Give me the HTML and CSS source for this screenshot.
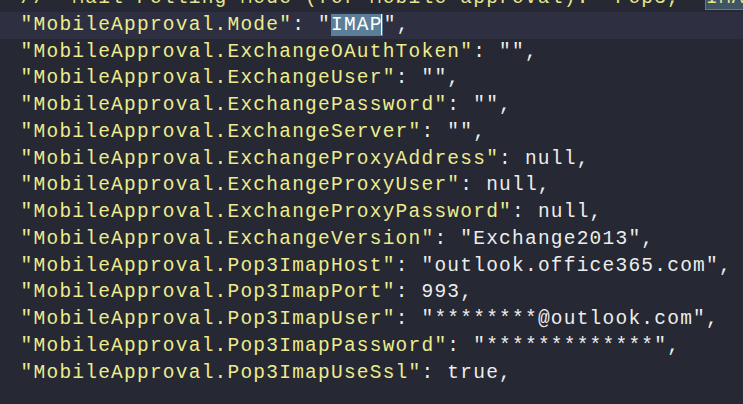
FILE: index.html
```html
<!DOCTYPE html>
<html>
<head>
<meta charset="utf-8">
<link rel="stylesheet" href="styles.css">
</head>
<body>
<div class="editor">
  <div class="line comment">//  Mail Polling Mode (for Mobile approval):  Pop3,  <span class="match">IMAP</span></div>
  <div class="line current"><span class="key">"MobileApproval.Mode"</span>: "<span class="sel">IMAP</span><span class="caret"></span>",</div>
  <div class="line"><span class="key">"MobileApproval.ExchangeOAuthToken"</span>: "",</div>
  <div class="line"><span class="key">"MobileApproval.ExchangeUser"</span>: "",</div>
  <div class="line"><span class="key">"MobileApproval.ExchangePassword"</span>: "",</div>
  <div class="line"><span class="key">"MobileApproval.ExchangeServer"</span>: "",</div>
  <div class="line"><span class="key">"MobileApproval.ExchangeProxyAddress"</span>: null,</div>
  <div class="line"><span class="key">"MobileApproval.ExchangeProxyUser"</span>: null,</div>
  <div class="line"><span class="key">"MobileApproval.ExchangeProxyPassword"</span>: null,</div>
  <div class="line"><span class="key">"MobileApproval.ExchangeVersion"</span>: "Exchange2013",</div>
  <div class="line"><span class="key">"MobileApproval.Pop3ImapHost"</span>: "outlook.office365.com",</div>
  <div class="line"><span class="key">"MobileApproval.Pop3ImapPort"</span>: 993,</div>
  <div class="line"><span class="key">"MobileApproval.Pop3ImapUser"</span>: "********@outlook.com",</div>
  <div class="line"><span class="key">"MobileApproval.Pop3ImapPassword"</span>: "*************",</div>
  <div class="line"><span class="key">"MobileApproval.Pop3ImapUseSsl"</span>: true,</div>
</div>
</body>
</html>
```
FILE: styles.css
```css
html, body {
  margin: 0;
  padding: 0;
  background: #262833;
  overflow: hidden;
}
.editor {
  margin-top: -15px;
  font-family: "Liberation Mono", "DejaVu Sans Mono", monospace;
  font-size: 19.5px;
  letter-spacing: 1.23px;
  line-height: 26.75px;
  color: #ededed;
}
.line {
  padding-left: 20.6px;
  height: 26.75px;
  white-space: pre;
}
.comment {
  color: #e6e68c;
}
.current {
  background: #2e3041;
}
.key {
  color: #ecec8e;
}
.sel {
  background: #5b7f98;
  color: #ffffff;
}
.match {
  background: #3f5566;
  outline: 1px solid #5f7a8c;
}
.caret {
  display: inline-block;
  width: 0;
  height: 21px;
  margin-left: -1.23px;
  margin-right: 1.23px;
  border-left: 1.5px solid #ffffff;
  vertical-align: -5px;
  letter-spacing: 0;
}
```
